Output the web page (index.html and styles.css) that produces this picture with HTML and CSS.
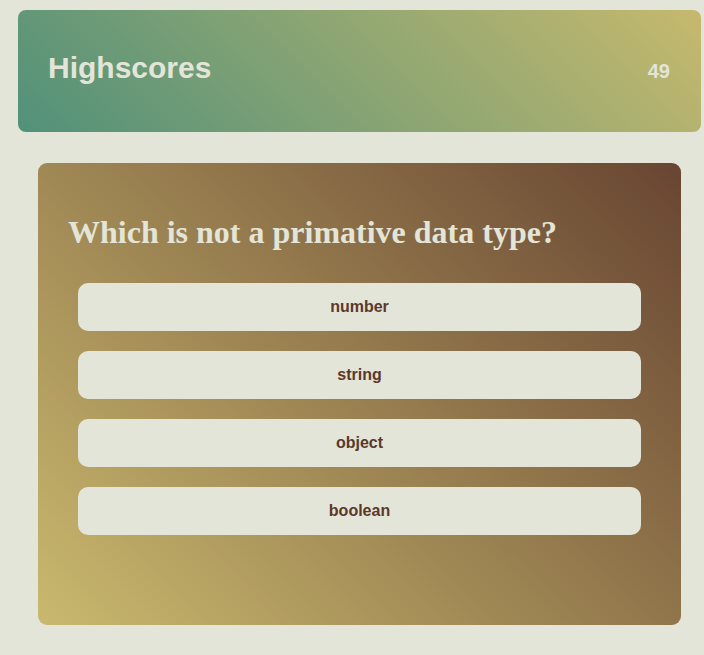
FILE: index.html
```html
<!DOCTYPE html>
<html lang="en">
<head>
<meta charset="utf-8">
<title>Quiz</title>
<link rel="stylesheet" href="styles.css">
</head>
<body>
<header class="topbar">
  <span class="topbar-title">Highscores</span>
  <span class="topbar-score">49</span>
</header>
<main class="card">
  <h1 class="question">Which is not a primative data type?</h1>
  <div class="answers">
    <button class="answer">number</button>
    <button class="answer">string</button>
    <button class="answer">object</button>
    <button class="answer">boolean</button>
  </div>
</main>
</body>
</html>
```
FILE: styles.css
```css
html, body {
  margin: 0;
  padding: 0;
}
body {
  background: #e3e5d9;
  font-family: "Liberation Sans", Arial, sans-serif;
  padding: 10px 3px 0 18px;
  min-height: 655px;
  box-sizing: border-box;
}
.topbar {
  height: 122px;
  box-sizing: border-box;
  border-radius: 8px;
  background: linear-gradient(45deg, #51917a 0%, #c6b96d 100%);
  display: flex;
  justify-content: space-between;
  align-items: baseline;
  padding: 41px 31px 0 30px;
  color: #e3e5d9;
  font-weight: bold;
}
.topbar-title {
  font-size: 30px;
  line-height: 34px;
}
.topbar-score {
  font-size: 20px;
}
.card {
  display: block;
  margin: 31px 20px 0 20px;
  height: 462px;
  box-sizing: border-box;
  border-radius: 9px;
  background: linear-gradient(45deg, #c9b96e 0%, #684532 100%);
  padding: 51px 40px 0 30px;
}
.question {
  margin: 0 0 32px 0;
  font-family: "Liberation Serif", "Times New Roman", serif;
  font-weight: bold;
  font-size: 32px;
  line-height: 37px;
  color: #e3e5d9;
}
.answers {
  display: flex;
  flex-direction: column;
  gap: 20px;
  padding-left: 10px;
}
.answer {
  height: 48px;
  border: none;
  border-radius: 10px;
  background: #e3e5d9;
  color: #5c3828;
  font-family: "Liberation Sans", Arial, sans-serif;
  font-weight: bold;
  font-size: 16px;
  padding: 0;
}
```
